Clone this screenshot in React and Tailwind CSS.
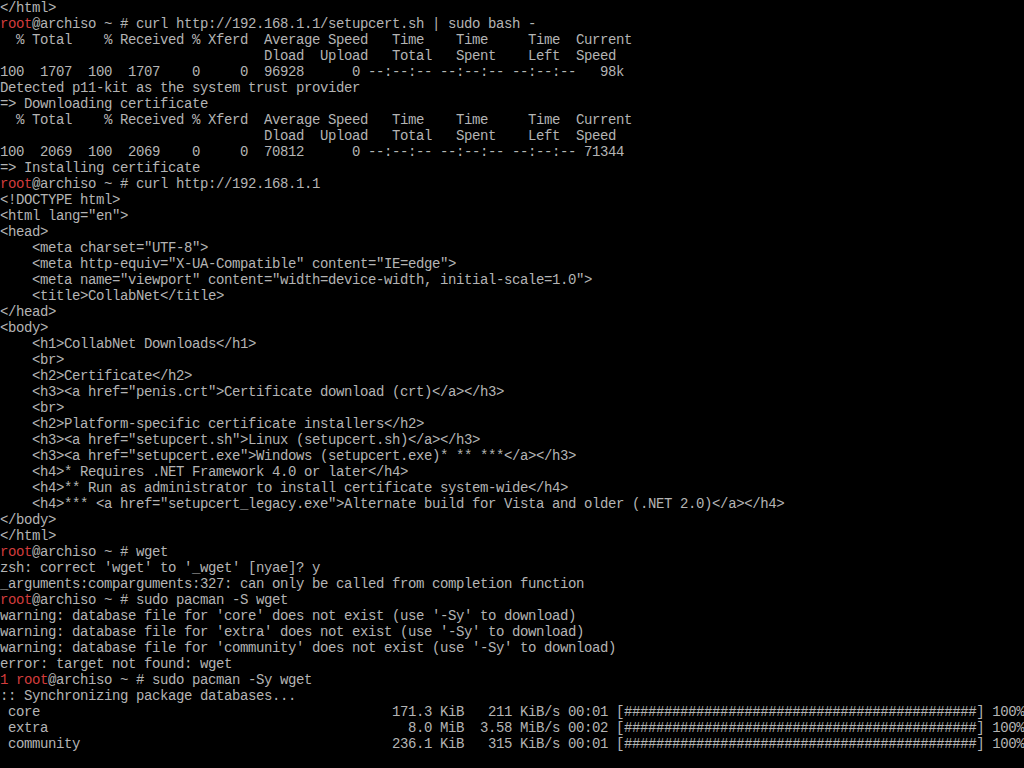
import React from "react";

// pacman sync rows: name padded to col 49, bar of 44 hashes
const syncRow = (name, size, rate, time) =>
  (" " + name).padEnd(49) +
  size.padStart(9) +
  "  " +
  rate.padStart(10) +
  " " +
  time +
  " [" +
  "#".repeat(44) +
  "] 100%";

const curlHead = [
  "  % Total    % Received % Xferd  Average Speed   Time    Time     Time  Current",
  "                                 Dload  Upload   Total   Spent    Left  Speed",
];

// each entry: plain string, or { prompt, cmd, status }
const lines = [
  "</html>",
  { prompt: true, cmd: "curl http://192.168.1.1/setupcert.sh | sudo bash -" },
  ...curlHead,
  "100  1707  100  1707    0     0  96928      0 --:--:-- --:--:-- --:--:--   98k",
  "Detected p11-kit as the system trust provider",
  "=> Downloading certificate",
  ...curlHead,
  "100  2069  100  2069    0     0  70812      0 --:--:-- --:--:-- --:--:-- 71344",
  "=> Installing certificate",
  { prompt: true, cmd: "curl http://192.168.1.1" },
  "<!DOCTYPE html>",
  '<html lang="en">',
  "<head>",
  '    <meta charset="UTF-8">',
  '    <meta http-equiv="X-UA-Compatible" content="IE=edge">',
  '    <meta name="viewport" content="width=device-width, initial-scale=1.0">',
  "    <title>CollabNet</title>",
  "</head>",
  "<body>",
  "    <h1>CollabNet Downloads</h1>",
  "    <br>",
  "    <h2>Certificate</h2>",
  '    <h3><a href="penis.crt">Certificate download (crt)</a></h3>',
  "    <br>",
  "    <h2>Platform-specific certificate installers</h2>",
  '    <h3><a href="setupcert.sh">Linux (setupcert.sh)</a></h3>',
  '    <h3><a href="setupcert.exe">Windows (setupcert.exe)* ** ***</a></h3>',
  "    <h4>* Requires .NET Framework 4.0 or later</h4>",
  "    <h4>** Run as administrator to install certificate system-wide</h4>",
  '    <h4>*** <a href="setupcert_legacy.exe">Alternate build for Vista and older (.NET 2.0)</a></h4>',
  "</body>",
  "</html>",
  { prompt: true, cmd: "wget" },
  "zsh: correct 'wget' to '_wget' [nyae]? y",
  "_arguments:comparguments:327: can only be called from completion function",
  { prompt: true, cmd: "sudo pacman -S wget" },
  "warning: database file for 'core' does not exist (use '-Sy' to download)",
  "warning: database file for 'extra' does not exist (use '-Sy' to download)",
  "warning: database file for 'community' does not exist (use '-Sy' to download)",
  "error: target not found: wget",
  { prompt: true, status: "1", cmd: "sudo pacman -Sy wget" },
  ":: Synchronizing package databases...",
  syncRow("core", "171.3 KiB", "211 KiB/s", "00:01"),
  syncRow("extra", "8.0 MiB", "3.58 MiB/s", "00:02"),
  syncRow("community", "236.1 KiB", "315 KiB/s", "00:01"),
  "",
];

function Line({ line }) {
  if (typeof line === "string") {
    return <div className="h-4 whitespace-pre">{line || " "}</div>;
  }
  return (
    <div className="h-4 whitespace-pre">
      {line.status && <span className="text-[#d33c3c]">{line.status} </span>}
      <span className="text-[#d33c3c]">root</span>
      {"@archiso ~ # " + line.cmd}
    </div>
  );
}

export default function App() {
  return (
    <div
      className="w-[1024px] h-[768px] overflow-hidden bg-black text-[#b4b4b4] text-[14px] leading-4 tracking-[-0.4px]"
      style={{ fontFamily: '"Liberation Mono", "DejaVu Sans Mono", monospace' }}
    >
      {lines.map((line, idx) => (
        <Line key={idx} line={line} />
      ))}
    </div>
  );
}
